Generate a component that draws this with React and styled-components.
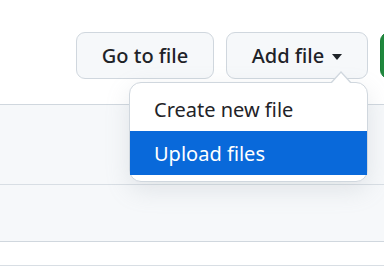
import React from "react";
import styled, { createGlobalStyle } from "styled-components";

const GlobalStyle = createGlobalStyle`
  html, body {
    margin: 0;
    padding: 0;
    background: #ffffff;
  }
  body {
    font-family: "Noto Sans", "Liberation Sans", sans-serif;
    color: #1f2328;
  }
`;

const Page = styled.div`
  width: 384px;
  height: 276px;
  overflow: hidden;
  position: relative;
`;

const Toolbar = styled.div`
  display: flex;
  align-items: flex-start;
  gap: 12px;
  padding: 32px 0 0 76px;
  height: 104px;
  box-sizing: border-box;
  flex-wrap: nowrap;
`;

const Button = styled.button`
  flex: none;
  display: flex;
  align-items: center;
  justify-content: center;
  gap: 8px;
  width: ${(p) => p.$width}px;
  height: 47px;
  padding: 0;
  border: 1px solid ${(p) => (p.$primary ? "#1a7f37" : "#d0d7de")};
  border-radius: 9px;
  background: ${(p) => (p.$primary ? "#1f883d" : "#f6f8fa")};
  color: ${(p) => (p.$primary ? "#ffffff" : "#1f2328")};
  font-family: inherit;
  font-size: 20px;
  font-weight: 500;
  box-sizing: border-box;
`;

const Caret = styled.span`
  width: 0;
  height: 0;
  border-left: 5.5px solid transparent;
  border-right: 5.5px solid transparent;
  border-top: 6px solid #1f2328;
  margin-top: 2px;
`;

const MenuAnchor = styled.div`
  position: relative;
  flex: none;
`;

const Menu = styled.div`
  position: absolute;
  top: 50px;
  right: 0;
  width: 239px;
  padding: 4px 0 6px;
  background: #ffffff;
  border: 1px solid #d0d7de;
  border-radius: 12px;
  box-shadow: 0 8px 24px rgba(140, 149, 159, 0.2);
  box-sizing: border-box;
  z-index: 10;

  &::before,
  &::after {
    content: "";
    position: absolute;
    width: 0;
    height: 0;
    border-style: solid;
  }
  &::before {
    top: -12px;
    right: 15px;
    border-width: 0 11px 12px 11px;
    border-color: transparent transparent #d0d7de transparent;
  }
  &::after {
    top: -10px;
    right: 16px;
    border-width: 0 10px 11px 10px;
    border-color: transparent transparent #ffffff transparent;
  }
`;

const MenuItem = styled.div`
  height: 44px;
  display: flex;
  align-items: center;
  padding-left: 24px;
  font-size: 20px;
  background: ${(p) => (p.$active ? "#0969da" : "transparent")};
  color: ${(p) => (p.$active ? "#ffffff" : "#1f2328")};
`;

const Table = styled.div`
  border-top: 1px solid #d0d7de;
`;

const Row = styled.div`
  height: ${(p) => p.$height}px;
  background: ${(p) => (p.$grey ? "#f6f8fa" : "#ffffff")};
  border-bottom: 1px solid ${(p) => p.$line};
`;

export default function App() {
  return (
    <Page>
      <GlobalStyle />
      <Toolbar>
        <Button $width={138}>Go to file</Button>
        <MenuAnchor>
          <Button $width={142}>
            Add file <Caret />
          </Button>
          <Menu>
            <MenuItem>Create new file</MenuItem>
            <MenuItem $active>Upload files</MenuItem>
          </Menu>
        </MenuAnchor>
        <Button $width={110} $primary aria-label="Code" />
      </Toolbar>
      <Table>
        <Row $height={79} $grey $line="#d8dee4" />
        <Row $height={56} $grey $line="#d0d7de" />
        <Row $height={23} $line="#d8dee4" />
      </Table>
    </Page>
  );
}
